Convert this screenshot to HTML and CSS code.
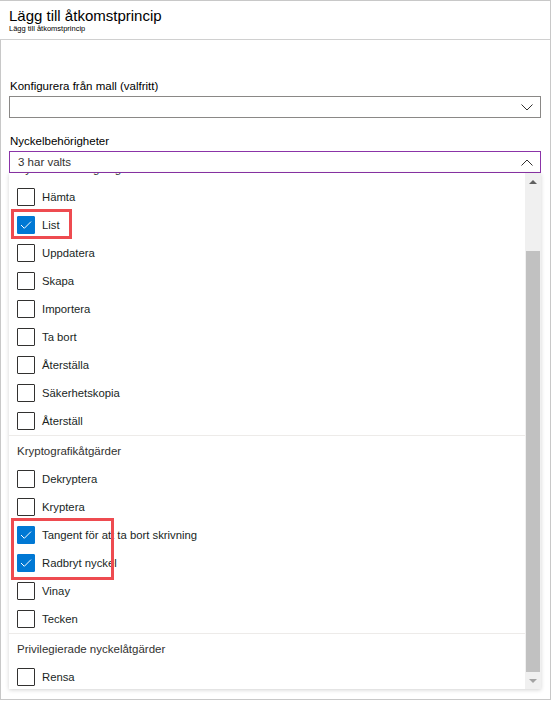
FILE: index.html
```html
<!DOCTYPE html>
<html lang="sv">
<head>
<meta charset="utf-8">
<title>Lägg till åtkomstprincip</title>
<link rel="stylesheet" href="styles.css">
</head>
<body>
<div class="frame">
  <header class="header">
    <h1 class="title">Lägg till åtkomstprincip</h1>
    <div class="subtitle">Lägg till åtkomstprincip</div>
  </header>
  <main class="content">
    <label class="field-label field-label-first">Konfigurera från mall (valfritt)</label>
    <div class="select">
      <span class="select-value"></span>
      <svg class="chev" width="12" height="7" viewBox="0 0 12 7"><path d="M0.5 0.5 L6 6 L11.5 0.5" fill="none" stroke="#323130" stroke-width="1"/></svg>
    </div>
    <label class="field-label">Nyckelbehörigheter</label>
    <div class="select select-open">
      <span class="select-value">3 har valts</span>
      <svg class="chev" width="12" height="7" viewBox="0 0 12 7"><path d="M0.5 6.5 L6 1 L11.5 6.5" fill="none" stroke="#323130" stroke-width="1"/></svg>
    </div>
    <div class="panel">
      <div class="list-viewport">
        <div class="list">
          <div class="group">
            <div class="group-label">Nyckelhanteringsåtgärder</div>
            <div class="item"><span class="box"></span><span class="item-text">Hämta</span></div>
            <div class="item"><span class="box checked"><svg width="12" height="10" viewBox="0 0 12 10"><path d="M1 5 L4.3 8.3 L11 1.6" fill="none" stroke="#fff" stroke-width="1"/></svg></span><span class="item-text">List</span></div>
            <div class="item"><span class="box"></span><span class="item-text">Uppdatera</span></div>
            <div class="item"><span class="box"></span><span class="item-text">Skapa</span></div>
            <div class="item"><span class="box"></span><span class="item-text">Importera</span></div>
            <div class="item"><span class="box"></span><span class="item-text">Ta bort</span></div>
            <div class="item"><span class="box"></span><span class="item-text">Återställa</span></div>
            <div class="item"><span class="box"></span><span class="item-text">Säkerhetskopia</span></div>
            <div class="item"><span class="box"></span><span class="item-text">Återställ</span></div>
          </div>
          <div class="group group-sep">
            <div class="group-label">Kryptografikåtgärder</div>
            <div class="item"><span class="box"></span><span class="item-text">Dekryptera</span></div>
            <div class="item"><span class="box"></span><span class="item-text">Kryptera</span></div>
            <div class="item"><span class="box checked"><svg width="12" height="10" viewBox="0 0 12 10"><path d="M1 5 L4.3 8.3 L11 1.6" fill="none" stroke="#fff" stroke-width="1"/></svg></span><span class="item-text">Tangent för att ta bort skrivning</span></div>
            <div class="item"><span class="box checked"><svg width="12" height="10" viewBox="0 0 12 10"><path d="M1 5 L4.3 8.3 L11 1.6" fill="none" stroke="#fff" stroke-width="1"/></svg></span><span class="item-text">Radbryt nyckel</span></div>
            <div class="item"><span class="box"></span><span class="item-text">Vinay</span></div>
            <div class="item"><span class="box"></span><span class="item-text">Tecken</span></div>
          </div>
          <div class="group group-sep">
            <div class="group-label">Privilegierade nyckelåtgärder</div>
            <div class="item"><span class="box"></span><span class="item-text">Rensa</span></div>
          </div>
        </div>
        <div class="highlight highlight-1"></div>
        <div class="highlight highlight-2"></div>
      </div>
      <div class="scrollbar">
        <div class="sb-arrow sb-up"></div>
        <div class="sb-track"><div class="sb-thumb"></div></div>
        <div class="sb-arrow sb-down"></div>
      </div>
    </div>
  </main>
</div>
</body>
</html>
```
FILE: styles.css
```css
* { box-sizing: border-box; }
html, body { margin: 0; padding: 0; background: #fff; }
body {
  font-family: "Liberation Sans", Arial, sans-serif;
  color: #323130;
  width: 552px;
  height: 701px;
  overflow: hidden;
}
.frame {
  width: 551px;
  height: 700px;
  border-top: 1px solid #c8c8c8;
  border-right: 1px solid #c8c8c8;
  border-bottom: 1px solid #c8c8c8;
  display: flex;
  flex-direction: column;
}
.header {
  height: 39px;
  border-bottom: 1px solid #d0d0d0;
  padding: 6px 0 0 9px;
}
.title {
  margin: 0;
  font-weight: normal;
  font-size: 15px;
  line-height: 18px;
  color: #000;
}
.subtitle {
  font-size: 7.5px;
  line-height: 8px;
  color: #000;
  margin-top: 0;
}
.content {
  flex: 1;
  border-left: 1px solid #c8c8c8;
  padding: 0 0 0 8px;
  display: flex;
  flex-direction: column;
}
.field-label {
  display: block;
  font-size: 11.5px;
  line-height: 14px;
  color: #000;
  padding-left: 1px;
  margin-top: 16px;
  margin-bottom: 3px;
}
.field-label-first { margin-top: 39px; margin-bottom: 3px; }
.select {
  width: 532px;
  height: 22px;
  border: 1px solid #8a8886;
  display: flex;
  align-items: center;
  justify-content: space-between;
  padding: 0 7px 0 8px;
}
.select-open { border-color: #8b34a8; }
.select-value { font-size: 11.5px; color: #323130; }
.chev { display: block; }
.panel {
  width: 532px;
  height: 516px;
  display: flex;
  box-shadow: 0 1px 4px rgba(0,0,0,0.18);
  background: #fff;
}
.list-viewport {
  position: relative;
  flex: 1;
  overflow: hidden;
}
.list { margin-top: -19px; }
.group-sep { border-top: 1px solid #edebe9; }
.group-label {
  height: 29px;
  display: flex;
  align-items: center;
  padding-left: 8px;
  font-size: 11.5px;
  color: #323130;
}
.item {
  height: 28px;
  display: flex;
  align-items: center;
  padding-left: 8px;
}
.box {
  width: 18px;
  height: 18px;
  border: 1px solid #323130;
  border-radius: 1px;
  margin-right: 7px;
  display: flex;
  align-items: center;
  justify-content: center;
  flex: none;
}
.box.checked { background: #0078d4; border-color: #0078d4; }
.item-text { font-size: 11.3px; color: #201f1e; }
.highlight {
  position: absolute;
  border: 3px solid #ee4b50;
}
.highlight-1 { left: 2px; top: 36px; width: 61px; height: 30px; }
.highlight-2 { left: 2px; top: 345px; width: 103px; height: 62px; }
.scrollbar {
  width: 16px;
  background: #f0f0f0;
  display: flex;
  flex-direction: column;
  flex: none;
}
.sb-arrow {
  height: 17px;
  display: flex;
  align-items: center;
  justify-content: center;
}
.sb-up::before {
  content: "";
  border-left: 4px solid transparent;
  border-right: 4px solid transparent;
  border-bottom: 4px solid #606060;
}
.sb-down::before {
  content: "";
  border-left: 4px solid transparent;
  border-right: 4px solid transparent;
  border-top: 4px solid #a3a3a3;
}
.sb-track {
  flex: 1;
  display: flex;
  flex-direction: column;
  justify-content: flex-end;
  padding: 0 1px 0 1px;
}
.sb-thumb { height: 421px; background: #c1c1c1; }
```
